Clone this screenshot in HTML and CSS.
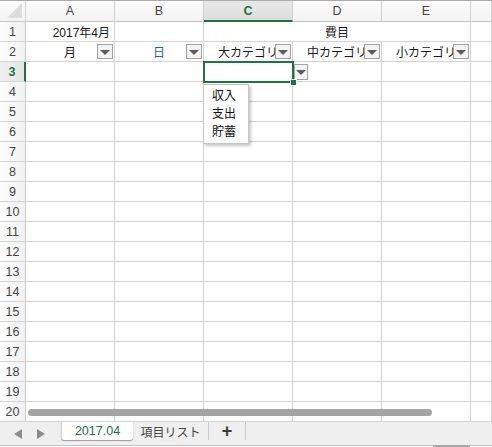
FILE: index.html
```html
<!DOCTYPE html>
<html lang="ja">
<head>
<meta charset="utf-8">
<title>Sheet</title>
<link rel="stylesheet" href="styles.css">
</head>
<body>
<div class="sheet">
  <div class="row hdr">
    <div class="cell corner"><span class="corner-tri"></span></div>
    <div class="cell ch">A</div>
    <div class="cell ch">B</div>
    <div class="cell ch ch-active">C</div>
    <div class="cell ch">D</div>
    <div class="cell ch">E</div>
    <div class="cell ch"></div>
  </div>
  <div class="row">
    <div class="cell rh">1</div>
    <div class="cell right">2017年4月</div>
    <div class="cell"></div>
    <div class="cell span3">費目</div>
    <div class="cell"></div>
  </div>
  <div class="row">
    <div class="cell rh">2</div>
    <div class="cell">月<span class="dd"><i></i></span></div>
    <div class="cell blue">日<span class="dd"><i></i></span></div>
    <div class="cell">大カテゴリ<span class="dd"><i></i></span></div>
    <div class="cell">中カテゴリ<span class="dd"><i></i></span></div>
    <div class="cell">小カテゴリ<span class="dd"><i></i></span></div>
    <div class="cell"></div>
  </div>
  <div class="row">
    <div class="cell rh rh-active">3</div>
    <div class="cell"></div>
    <div class="cell"></div>
    <div class="cell active-cell">
      <span class="sel"></span>
      <span class="handle"></span>
      <span class="dd dd-side"><i></i></span>
      <ul class="list">
        <li>収入</li>
        <li>支出</li>
        <li>貯蓄</li>
      </ul>
    </div>
    <div class="cell"></div>
    <div class="cell"></div>
    <div class="cell"></div>
  </div>
  <div class="row"><div class="cell rh">4</div><div class="cell"></div><div class="cell"></div><div class="cell"></div><div class="cell"></div><div class="cell"></div><div class="cell"></div></div>
  <div class="row"><div class="cell rh">5</div><div class="cell"></div><div class="cell"></div><div class="cell"></div><div class="cell"></div><div class="cell"></div><div class="cell"></div></div>
  <div class="row"><div class="cell rh">6</div><div class="cell"></div><div class="cell"></div><div class="cell"></div><div class="cell"></div><div class="cell"></div><div class="cell"></div></div>
  <div class="row"><div class="cell rh">7</div><div class="cell"></div><div class="cell"></div><div class="cell"></div><div class="cell"></div><div class="cell"></div><div class="cell"></div></div>
  <div class="row"><div class="cell rh">8</div><div class="cell"></div><div class="cell"></div><div class="cell"></div><div class="cell"></div><div class="cell"></div><div class="cell"></div></div>
  <div class="row"><div class="cell rh">9</div><div class="cell"></div><div class="cell"></div><div class="cell"></div><div class="cell"></div><div class="cell"></div><div class="cell"></div></div>
  <div class="row"><div class="cell rh">10</div><div class="cell"></div><div class="cell"></div><div class="cell"></div><div class="cell"></div><div class="cell"></div><div class="cell"></div></div>
  <div class="row"><div class="cell rh">11</div><div class="cell"></div><div class="cell"></div><div class="cell"></div><div class="cell"></div><div class="cell"></div><div class="cell"></div></div>
  <div class="row"><div class="cell rh">12</div><div class="cell"></div><div class="cell"></div><div class="cell"></div><div class="cell"></div><div class="cell"></div><div class="cell"></div></div>
  <div class="row"><div class="cell rh">13</div><div class="cell"></div><div class="cell"></div><div class="cell"></div><div class="cell"></div><div class="cell"></div><div class="cell"></div></div>
  <div class="row"><div class="cell rh">14</div><div class="cell"></div><div class="cell"></div><div class="cell"></div><div class="cell"></div><div class="cell"></div><div class="cell"></div></div>
  <div class="row"><div class="cell rh">15</div><div class="cell"></div><div class="cell"></div><div class="cell"></div><div class="cell"></div><div class="cell"></div><div class="cell"></div></div>
  <div class="row"><div class="cell rh">16</div><div class="cell"></div><div class="cell"></div><div class="cell"></div><div class="cell"></div><div class="cell"></div><div class="cell"></div></div>
  <div class="row"><div class="cell rh">17</div><div class="cell"></div><div class="cell"></div><div class="cell"></div><div class="cell"></div><div class="cell"></div><div class="cell"></div></div>
  <div class="row"><div class="cell rh">18</div><div class="cell"></div><div class="cell"></div><div class="cell"></div><div class="cell"></div><div class="cell"></div><div class="cell"></div></div>
  <div class="row"><div class="cell rh">19</div><div class="cell"></div><div class="cell"></div><div class="cell"></div><div class="cell"></div><div class="cell"></div><div class="cell"></div></div>
  <div class="row"><div class="cell rh">20</div><div class="cell"></div><div class="cell"></div><div class="cell"></div><div class="cell"></div><div class="cell"></div><div class="cell"></div></div>
  <div class="hscroll"></div>
</div>
<div class="tabbar">
  <div class="nav">
    <svg width="8" height="10" viewBox="0 0 8 10"><polygon points="8,0 8,10 0,5" fill="#8c8c8c"/></svg>
    <svg width="8" height="10" viewBox="0 0 8 10"><polygon points="0,0 0,10 8,5" fill="#8c8c8c"/></svg>
  </div>
  <div class="tab tab-active">2017.04</div>
  <div class="tab">項目リスト</div>
  <div class="add">+</div>
  <div class="rest"><span class="vthumb"></span></div>
</div>
</body>
</html>
```
FILE: styles.css
```css
body {
  margin: 0;
  width: 492px;
  height: 447px;
  overflow: hidden;
  background: #fff;
  font-family: "Liberation Sans", "Noto Sans CJK JP", sans-serif;
  font-size: 12px;
  color: #1a1a1a;
}

.sheet {
  position: relative;
  border-top: 1px solid #ababab;
}

.row {
  display: grid;
  grid-template-columns: 26px repeat(5, 89px) 1fr;
  height: 20px;
}

.row.hdr {
  height: 21px;
}

.cell {
  box-sizing: border-box;
  position: relative;
  display: flex;
  align-items: center;
  justify-content: center;
  white-space: nowrap;
  border-right: 1px solid #d4d4d4;
  border-bottom: 1px solid #d4d4d4;
}

.cell.right {
  justify-content: flex-end;
  padding-right: 4px;
}

.cell.span3 {
  grid-column: span 3;
}

.cell.blue {
  color: #2463b0;
}

/* headers */
.hdr .cell {
  background: linear-gradient(#fbfbfb, #f3f3f3);
  color: #444;
  border-right-color: #d0d0d0;
  border-bottom-color: #c4c4c4;
  font-size: 12.5px;
}

.corner-tri {
  position: absolute;
  right: 3px;
  bottom: 3px;
  width: 0;
  height: 0;
  border-left: 15px solid transparent;
  border-bottom: 15px solid #dcdcdc;
}

.hdr .ch-active {
  background: linear-gradient(#e8e8e8, #dedede);
  color: #217346;
  font-weight: bold;
  border-bottom: 2px solid #217346;
}

.rh {
  background: linear-gradient(90deg, #fdfdfd, #f2f2f2);
  color: #444;
  border-right-color: #c8c8c8;
  font-size: 12.5px;
}

.rh-active {
  color: #217346;
  font-weight: bold;
  background: linear-gradient(90deg, #f0f0f0, #e4e4e4);
  border-right: 2px solid #217346;
}

/* dropdown buttons */
.dd {
  position: absolute;
  right: 1px;
  top: 2px;
  width: 16px;
  height: 15px;
  box-sizing: border-box;
  border: 1px solid #a3a3a3;
  background: #f3f3f3;
  display: flex;
  align-items: center;
  justify-content: center;
  z-index: 2;
}

.dd i {
  width: 0;
  height: 0;
  border-left: 5px solid transparent;
  border-right: 5px solid transparent;
  border-top: 5px solid #5c5c5c;
  margin-top: 1px;
}

.dd.dd-side {
  right: auto;
  left: 90px;
  top: 2px;
  width: 14px;
  height: 16px;
}

/* selection */
.sel {
  position: absolute;
  left: -1px;
  top: -1px;
  right: -2px;
  bottom: -2px;
  border: 2px solid #217346;
  z-index: 3;
}

.handle {
  position: absolute;
  right: -5px;
  bottom: -5px;
  width: 5px;
  height: 5px;
  background: #217346;
  border: 1px solid #fff;
  z-index: 4;
}

.list {
  position: absolute;
  left: -1px;
  top: 22px;
  width: 46px;
  margin: 0;
  padding: 2px 0;
  list-style: none;
  box-sizing: border-box;
  background: #fff;
  border: 1px solid #c6c6c6;
  box-shadow: 2px 2px 3px rgba(0, 0, 0, 0.22);
  z-index: 5;
}

.list li {
  height: 18px;
  line-height: 18px;
  padding-left: 8px;
  color: #111;
}

.hscroll {
  position: absolute;
  left: 28px;
  top: 408px;
  width: 404px;
  height: 7px;
  border-radius: 4px;
  background: #a4a4a4;
  z-index: 2;
}

/* tab bar */
.tabbar {
  display: flex;
  height: 23px;
  background: #efefef;
  border-bottom: 1px solid #c2c2c2;
}

.nav {
  width: 61px;
  display: flex;
  align-items: center;
  padding-left: 14px;
  gap: 15px;
  box-sizing: border-box;
}

.tab {
  width: 76px;
  height: 18px;
  box-sizing: border-box;
  display: flex;
  align-items: center;
  justify-content: center;
  color: #444;
  border-right: 1px solid #cbcbcb;
  font-size: 12px;
}

.tab.tab-active {
  width: 72px;
  height: 19px;
  margin-top: -1px;
  background: #fff;
  color: #217346;
  border-right: none;
  border-left: 1px solid #d6d6d6;
  border-radius: 0 0 3px 3px;
  box-shadow: 0 1px 1px rgba(0, 0, 0, 0.35);
  font-size: 12.5px;
}

.add {
  width: 37px;
  height: 18px;
  box-sizing: border-box;
  display: flex;
  align-items: center;
  justify-content: center;
  border-right: 1px solid #cbcbcb;
  color: #3a3a3a;
  font-size: 18px;
  font-weight: bold;
  line-height: 1;
}

.rest {
  flex: 1;
  position: relative;
}

.vthumb {
  position: absolute;
  right: 22px;
  bottom: -2px;
  width: 37px;
  height: 2px;
  background: #a8a8a8;
}
```
